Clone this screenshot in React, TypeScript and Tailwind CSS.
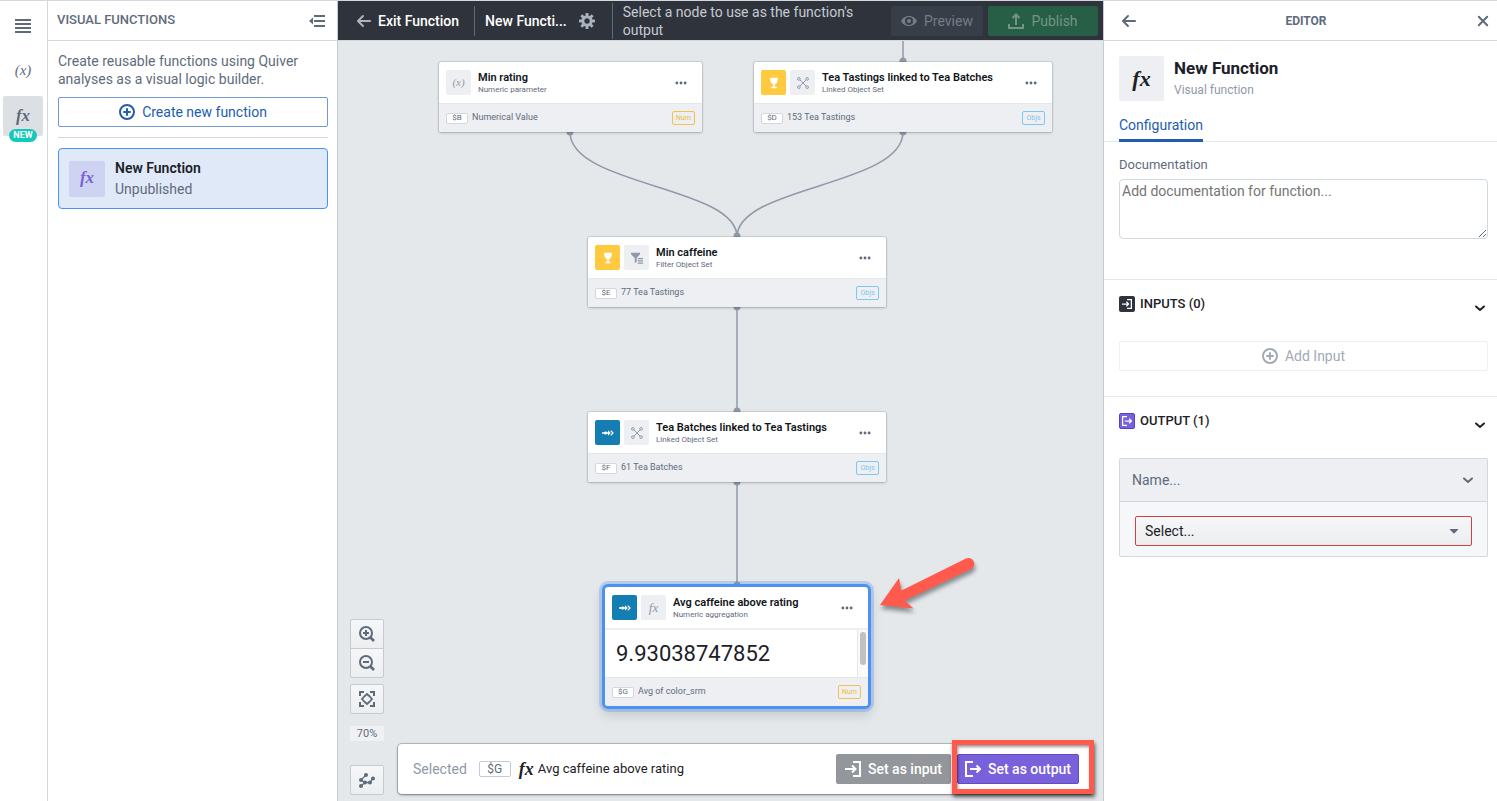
import { type ReactNode, useState } from 'react';
import clsx from 'clsx';

type IconProps = { className?: string };

const Icon = ({ className = 'size-4', children }: IconProps & { children: ReactNode }) => (
  <svg viewBox="0 0 16 16" className={clsx('shrink-0', className)} fill="currentColor" aria-hidden="true">
    {children}
  </svg>
);

const StrokeIcon = ({ className = 'size-4', children }: IconProps & { children: ReactNode }) => (
  <svg
    viewBox="0 0 16 16"
    className={clsx('shrink-0', className)}
    fill="none"
    stroke="currentColor"
    strokeWidth="2"
    aria-hidden="true"
  >
    {children}
  </svg>
);

const MenuIcon = ({ className }: IconProps) => (
  <Icon className={className}>
    <path d="M0 1h16v2H0zM0 5h16v2H0zM0 9h16v2H0zM0 13h16v2H0z" />
  </Icon>
);

const CollapseIcon = ({ className }: IconProps) => (
  <Icon className={className}>
    <path d="M5 2h11v2H5zM5 7h11v2H5zM5 12h11v2H5zM0 8l4-3.5v7z" />
  </Icon>
);

const ArrowLeftIcon = ({ className }: IconProps) => (
  <Icon className={className}>
    <path d="M13.99 6.99H4.41L7.7 3.7a1.003 1.003 0 0 0-1.42-1.42l-5 5a1.014 1.014 0 0 0 0 1.42l5 5a1.003 1.003 0 0 0 1.42-1.41L4.41 8.99H14c.55 0 1-.45 1-1s-.46-1-1.01-1z" />
  </Icon>
);

const AddIcon = ({ className }: IconProps) => (
  <StrokeIcon className={className}>
    <circle cx="8" cy="8" r="7" />
    <path d="M5 8h6M8 5v6" strokeLinecap="round" />
  </StrokeIcon>
);

const teeth = [0, 45, 90, 135, 180, 225, 270, 315];

const CogIcon = ({ className }: IconProps) => (
  <Icon className={className}>
    <circle cx="8" cy="8" r="4.2" fill="none" stroke="currentColor" strokeWidth="3" />
    {teeth.map((angle) => (
      <path key={angle} d="M6.6 0h2.8v3.2H6.6z" transform={`rotate(${angle} 8 8)`} />
    ))}
  </Icon>
);

const EyeIcon = ({ className }: IconProps) => (
  <Icon className={className}>
    <path
      fillRule="evenodd"
      d="M8 3C4 3 1.200 5.600 0 8c1.200 2.400 4 5 8 5s6.800-2.600 8-5c-1.200-2.400-4-5-8-5zm0 9a4 4 0 1 1 0-8 4 4 0 0 1 0 8zm0-6a2 2 0 1 0 0 4 2 2 0 0 0 0-4z"
    />
  </Icon>
);

const ExportIcon = ({ className }: IconProps) => (
  <StrokeIcon className={className}>
    <path d="M1 11v4h14v-4M8 12V2M4.500 5L8 1.500 11.500 5" />
  </StrokeIcon>
);

const CrossIcon = ({ className }: IconProps) => (
  <StrokeIcon className={className}>
    <path d="M3.800 3.800l8.400 8.400M12.200 3.800l-8.400 8.400" strokeLinecap="round" />
  </StrokeIcon>
);

const LogInIcon = ({ className }: IconProps) => (
  <StrokeIcon className={className}>
    <path d="M8 1h7v14H8M0 8h10M7 4.500L10.500 8 7 11.500" />
  </StrokeIcon>
);

const LogOutIcon = ({ className }: IconProps) => (
  <StrokeIcon className={className}>
    <path d="M8 1H1v14h7M5 8h10M11.500 4.500L15 8l-3.500 3.500" />
  </StrokeIcon>
);

const ChevronIcon = ({ className }: IconProps) => (
  <StrokeIcon className={className}>
    <path d="M4 6.500l4 3.500 4-3.500" strokeLinecap="round" />
  </StrokeIcon>
);

const MoreIcon = ({ className }: IconProps) => (
  <Icon className={className}>
    <circle cx="2.500" cy="8" r="1.900" />
    <circle cx="8" cy="8" r="1.900" />
    <circle cx="13.500" cy="8" r="1.900" />
  </Icon>
);

const ZoomIcon = ({ plus }: { plus?: boolean }) => (
  <StrokeIcon>
    <circle cx="7" cy="7" r="6" />
    <path d="M11.500 11.500l3.500 3.500" strokeWidth="2.600" />
    <path d={plus ? 'M4 7h6M7 4v6' : 'M4 7h6'} />
  </StrokeIcon>
);

const FitIcon = () => (
  <StrokeIcon>
    <path d="M1 5V1h4M11 1h4v4M15 11v4h-4M5 15H1v-4" />
    <path
      d="M5.500 5.200L8 3l2.500 2.200M5.500 10.800L8 13l2.500-2.200M5.200 5.500L3 8l2.200 2.500M10.800 5.500L13 8l-2.200 2.500"
      strokeWidth="1.800"
      strokeLinecap="round"
    />
  </StrokeIcon>
);

const GraphIcon = () => (
  <Icon>
    <path d="M2 14L6 10.500 11 10.500 14 6M2 8L6 10.500M2 8L7 3" fill="none" stroke="currentColor" strokeWidth="1.300" />
    <circle cx="2" cy="8" r="2" />
    <circle cx="7" cy="3" r="2" />
    <circle cx="6" cy="10.500" r="2" />
    <circle cx="11" cy="10.500" r="2" />
    <circle cx="14" cy="6.500" r="2" />
    <circle cx="2" cy="14" r="2" />
  </Icon>
);

const GobletIcon = () => (
  <Icon className="size-3">
    <path d="M3 1h10c.4 4.500-.8 7.800-4 8.600V13h2.500v2h-7v-2H7V9.600C3.800 8.800 2.600 5.500 3 1z" />
  </Icon>
);

const FlowIcon = () => (
  <Icon className="size-3">
    <path d="M0 7.100h3a2.400 2.400 0 0 1 4-.2h1V4.300L11.500 8 8 11.700V9.100H7a2.400 2.400 0 0 1-4-.2H0z" />
    <path d="M11.700 5L14.700 8l-3 3" fill="none" stroke="currentColor" strokeWidth="1.500" />
  </Icon>
);

const LinkedIcon = () => (
  <StrokeIcon className="size-3">
    <g strokeWidth="1.300">
      <path d="M4 4l8 8M12 4l-8 8" />
      <circle cx="2.500" cy="2.500" r="1.800" />
      <circle cx="13.500" cy="2.500" r="1.800" />
      <circle cx="2.500" cy="13.500" r="1.800" />
      <circle cx="13.500" cy="13.500" r="1.800" />
    </g>
  </StrokeIcon>
);

const FilterIcon = () => (
  <Icon className="size-3">
    <path d="M0 1h12v2L7.500 8v5L5 15V8L0 3zM9 8h7v1.800H9zM9 11h7v1.800H9zM9 14h7v1.800H9z" />
  </Icon>
);

const Fx = ({ className }: IconProps) => (
  <span className={clsx("font-['Liberation_Serif',serif] italic", className)}>fx</span>
);

const Badge = ({ kind }: { kind: 'Num' | 'Objs' }) => (
  <span
    className={clsx(
      'flex h-3.5 w-[23px] items-center justify-center rounded-xs border text-[7px]',
      kind === 'Num' ? 'border-[#f3c14f] text-[#f0b93e]' : 'border-[#7cc8ee] text-[#7cc8ee]',
    )}
  >
    {kind}
  </span>
);

type NodeData = {
  id: string;
  title: string;
  subtitle: string;
  value: string;
  kind: 'Num' | 'Objs';
  place: string;
  source?: 'tasting' | 'batch';
  op: ReactNode;
  result?: string;
};

const nodes: NodeData[] = [
  {
    id: '$B',
    title: 'Min rating',
    subtitle: 'Numeric parameter',
    value: 'Numerical Value',
    kind: 'Num',
    place: 'left-[101px] top-[21px] w-[263px]',
    op: <span className="font-['Liberation_Serif',serif] text-[11px] italic">(x)</span>,
  },
  {
    id: '$D',
    title: 'Tea Tastings linked to Tea Batches',
    subtitle: 'Linked Object Set',
    value: '153 Tea Tastings',
    kind: 'Objs',
    place: 'left-[416px] top-[21px] w-[298px]',
    source: 'tasting',
    op: <LinkedIcon />,
  },
  {
    id: '$E',
    title: 'Min caffeine',
    subtitle: 'Filter Object Set',
    value: '77 Tea Tastings',
    kind: 'Objs',
    place: 'left-[250px] top-[196px] w-[298px]',
    source: 'tasting',
    op: <FilterIcon />,
  },
  {
    id: '$F',
    title: 'Tea Batches linked to Tea Tastings',
    subtitle: 'Linked Object Set',
    value: '61 Tea Batches',
    kind: 'Objs',
    place: 'left-[250px] top-[371px] w-[298px]',
    source: 'batch',
    op: <LinkedIcon />,
  },
  {
    id: '$G',
    title: 'Avg caffeine above rating',
    subtitle: 'Numeric aggregation',
    value: 'Avg of color_srm',
    kind: 'Num',
    place: 'left-[264px] top-[543px] w-[269px]',
    source: 'batch',
    op: <Fx className="text-[13px]" />,
    result: '9.93038747852',
  },
];

const NodeCard = ({ node }: { node: NodeData }) => (
  <article
    className={clsx(
      'absolute overflow-hidden bg-white',
      node.place,
      node.result
        ? 'rounded-md border-3 border-[#4c90f0] shadow-[0_0_0_3px_#4c90f04d,0_6px_12px_#11141826]'
        : 'rounded-xs shadow-[0_0_0_1px_#1114181a,0_1px_3px_#11141833]',
    )}
  >
    <div className="flex h-[41px] items-center gap-1 px-[7px]">
      {node.source && (
        <span
          className={clsx(
            'flex size-[25px] items-center justify-center rounded-xs text-white',
            node.source === 'tasting' ? 'bg-[#ffc940]' : 'bg-[#147eb3]',
          )}
        >
          {node.source === 'tasting' ? <GobletIcon /> : <FlowIcon />}
        </span>
      )}
      <span className="flex size-[25px] items-center justify-center rounded-xs bg-[#edeff2] text-[#8f99a8]">
        {node.op}
      </span>
      <div className="min-w-0 flex-1 pl-[3px]">
        <h3 className="truncate text-[11px] leading-[13px] font-semibold text-[#111418]">{node.title}</h3>
        <p className="text-[8px] leading-[11px] text-[#5f6b7c]">{node.subtitle}</p>
      </div>
      <button type="button" aria-label={`${node.title} options`} className="mr-2 text-[#5f6b7c]">
        <MoreIcon className="size-3" />
      </button>
    </div>
    {node.result && (
      <div className="flex h-[49px] border-t-2 border-[#edeff2]">
        <p className="flex flex-1 items-center pl-[11px] text-[22px] text-[#1c2127]">{node.result}</p>
        <div className="w-[11px] border-l border-[#e5e8eb] bg-[#fafafa] px-[2px] pt-[2px]">
          <div className="h-[33px] rounded-full bg-[#c1c1c1]" />
        </div>
      </div>
    )}
    <div className="flex h-[29px] items-center gap-1 border-t border-[#e5e8eb] bg-[#edeff2] px-[7px] text-[9px] text-[#5f6b7c]">
      <span className="flex h-[11px] w-[22px] items-center justify-center rounded-xs border border-[#d3d8de] bg-white text-[8px]">
        {node.id}
      </span>
      <span className="flex-1">{node.value}</span>
      <Badge kind={node.kind} />
    </div>
  </article>
);

const ports = [
  [565, 20],
  [232, 91],
  [565, 91],
  [399, 195],
  [399, 266],
  [399, 370],
  [399, 441],
  [399, 544],
];

const Edges = () => (
  <svg className="absolute inset-0 h-full w-full" aria-hidden="true">
    <g fill="none" stroke="#8f99a8" strokeWidth="1.500">
      <path d="M565 0V21M232 91C232 145 399 145 399 196M565 91C565 145 399 145 399 196M399 266V371M399 441V543" />
    </g>
    {ports.map(([x, y]) => (
      <circle key={`${x}-${y}`} cx={x} cy={y} r="3.500" fill="#8f99a8" />
    ))}
  </svg>
);

const toolButton =
  'flex h-[30px] w-[34px] items-center justify-center border border-[#c5cbd3] bg-linear-to-b from-[#f6f7f9] to-[#eceef0] text-[#5f6b7c]';

const CanvasTools = () => (
  <div className="absolute bottom-1.5 left-3 flex flex-col">
    <button type="button" aria-label="Zoom in" className={clsx(toolButton, 'rounded-t-xs')}>
      <ZoomIcon plus />
    </button>
    <button type="button" aria-label="Zoom out" className={clsx(toolButton, '-mt-px rounded-b-xs')}>
      <ZoomIcon />
    </button>
    <button type="button" aria-label="Zoom to fit" className={clsx(toolButton, 'mt-1.5 rounded-xs')}>
      <FitIcon />
    </button>
    <span className="mt-3 bg-[#f0f1f5] text-center text-[11px] leading-[15px] text-[#5f6b7c]">70%</span>
    <button type="button" aria-label="Auto layout" className={clsx(toolButton, 'mt-6 rounded-xs')}>
      <GraphIcon />
    </button>
  </div>
);

const SelectionBar = () => (
  <div className="absolute right-2.5 bottom-[7px] left-[60px] flex h-[50px] items-center rounded-sm bg-white pr-3.5 pl-[15px] text-sm shadow-[0_0_0_1px_#11141833,0_1px_3px_#11141866]">
    <span className="text-[#8f99a8]">Selected</span>
    <span className="ml-3 flex h-4 w-8 items-center justify-center rounded-xs border border-[#c5cbd3] text-xs text-[#5f6b7c]">
      $G
    </span>
    <Fx className="ml-2 text-lg leading-none font-bold text-[#1c2127]" />
    <span className="ml-1 flex-1 truncate text-[13px] text-[#1c2127]">Avg caffeine above rating</span>
    <button
      type="button"
      className="flex h-[30px] w-[115px] items-center justify-center gap-[7px] rounded-xs bg-[#93979b] font-medium whitespace-nowrap text-white"
    >
      <LogInIcon /> Set as input
    </button>
    <button
      type="button"
      className="ml-1.5 flex h-[30px] w-[122px] items-center justify-center gap-[7px] rounded-xs border border-[#634dbf] bg-[#7961db] font-medium whitespace-nowrap text-white"
    >
      <LogOutIcon /> Set as output
    </button>
  </div>
);

const Annotations = () => (
  <>
    <svg
      viewBox="0 0 104 60"
      className="absolute top-[512px] left-[537px] h-[60px] w-[104px] drop-shadow-[1px_4px_2px_#0006]"
      aria-hidden="true"
    >
      <path
        d="M5 52L24 25L26.500 37.500L91 5.600A5.500 5.500 0 0 1 96 16L29.500 47.500L38.500 55.500Z"
        fill="#ff5a4b"
      />
    </svg>
    <div className="pointer-events-none absolute right-[9px] bottom-[7px] h-[54px] w-[142px] border-[5px] border-[#ff5a4b] shadow-[1px_3px_4px_#0009,inset_1px_2px_3px_#0006]" />
  </>
);

const Rail = () => (
  <nav className="flex w-12 shrink-0 flex-col items-center border-r border-[#d3d8de] pt-[17px] pr-px text-[#5f6b7c]">
    <button type="button" aria-label="Menu">
      <MenuIcon />
    </button>
    <button
      type="button"
      aria-label="Parameters"
      className="mt-6 h-6 font-['Liberation_Serif',serif] text-[15px] italic"
    >
      (x)
    </button>
    <button
      type="button"
      aria-label="Visual functions"
      className="relative mt-3.5 flex size-10 items-center justify-center rounded-xs bg-[#dce0e5]"
    >
      <Fx className="text-[17px] font-bold" />
      <span className="absolute -bottom-1.5 flex h-[13px] items-center rounded-full bg-[#13c9ba] px-1 text-[9px] font-bold text-white">
        NEW
      </span>
    </button>
  </nav>
);

const FunctionsPanel = () => (
  <aside className="w-[290px] shrink-0 border-r border-[#c5cbd3] text-sm text-[#5f6b7c]">
    <header className="flex h-10 items-center justify-between border-b border-[#d3d8de] pr-3 pl-[9px]">
      <h2 className="text-[13px] font-medium">VISUAL FUNCTIONS</h2>
      <button type="button" aria-label="Collapse panel">
        <CollapseIcon />
      </button>
    </header>
    <div className="px-2.5 pt-[11px] pr-[9px]">
      <p className="leading-[18px]">Create reusable functions using Quiver analyses as a visual logic builder.</p>
      <button
        type="button"
        className="mt-[9px] flex h-[30px] w-full items-center justify-center gap-[7px] rounded-xs border border-[#7397d3] text-[#215db0]"
      >
        <AddIcon /> Create new function
      </button>
      <hr className="mt-2.5 border-[#d3d8de]" />
      <button
        type="button"
        className="mt-2.5 flex h-[61px] w-full items-center gap-2.5 rounded-sm border border-[#4c90f0] bg-[#e0e9f8] px-2.5 text-left"
      >
        <span className="flex size-9 items-center justify-center rounded-xs bg-[#cfd3f2] text-[#7961db]">
          <Fx className="text-[17px] font-bold" />
        </span>
        <span>
          <span className="block leading-[21px] font-semibold text-[#1c2127]">New Function</span>
          <span className="block leading-[21px]">Unpublished</span>
        </span>
      </button>
    </div>
  </aside>
);

const FunctionBar = () => (
  <header className="flex h-[39px] items-center bg-[#2f343c] pr-[5px] text-sm text-white">
    <button type="button" className="flex h-[30px] items-center gap-1.5 pr-[15px] pl-[18px] font-medium whitespace-nowrap">
      <ArrowLeftIcon className="size-4 text-[#abb3bf]" /> Exit Function
    </button>
    <div className="flex h-[30px] items-center border-l border-[#5f6b7c] pl-2.5 font-medium whitespace-nowrap">
      New Functi...
    </div>
    <button type="button" aria-label="Function settings" className="ml-3 text-[#abb3bf]">
      <CogIcon />
    </button>
    <p className="ml-[17px] min-w-0 flex-1 border-l border-[#5f6b7c] pr-5 pl-2.5 leading-[18px] text-[#c5cbd3]">
      Select a node to use as the function's output
    </p>
    <button
      type="button"
      disabled
      className="flex h-[30px] w-[92px] items-center justify-center gap-[7px] rounded-xs bg-[#383e47] text-[#737c89]"
    >
      <EyeIcon /> Preview
    </button>
    <button
      type="button"
      disabled
      className="ml-[5px] flex h-[30px] w-[110px] items-center justify-center gap-[7px] rounded-xs bg-[#275f46] text-[#739485]"
    >
      <ExportIcon /> Publish
    </button>
  </header>
);

const SectionTitle = ({ icon, children }: { icon: ReactNode; children: ReactNode }) => (
  <div className="flex items-center gap-[5px] text-[#1c2127]">
    {icon}
    <h3 className="flex-1 text-[13px] font-medium">{children}</h3>
    <button type="button" aria-label="Toggle section" className="mt-2">
      <ChevronIcon />
    </button>
  </div>
);

const EditorPanel = () => {
  const [documentation, setDocumentation] = useState('');
  const [name, setName] = useState('');
  const [output, setOutput] = useState('');

  return (
    <aside className="w-[394px] shrink-0 border-l border-[#c5cbd3] text-sm text-[#5f6b7c]">
      <header className="flex h-10 items-center justify-between border-b border-[#d3d8de] pr-1.5 pl-[17px]">
        <button type="button" aria-label="Back">
          <ArrowLeftIcon />
        </button>
        <h2 className="text-xs font-bold">EDITOR</h2>
        <button type="button" aria-label="Close editor">
          <CrossIcon />
        </button>
      </header>

      <div className="flex gap-2.5 px-[15px] pt-[15px]">
        <span className="flex size-[45px] items-center justify-center rounded-xs bg-[#edeff2] text-[#1c2127]">
          <Fx className="text-[22px] font-bold" />
        </span>
        <div>
          <h1 className="text-[17px] leading-6 font-bold text-[#1c2127]">New Function</h1>
          <p className="text-xs leading-5 text-[#8f99a8]">Visual function</p>
        </div>
      </div>

      <div className="mt-[9px] flex border-b border-[#e5e8eb] px-[15px]">
        <button type="button" className="-mb-px h-8 border-b-3 border-[#215db0] text-[#215db0]">
          Configuration
        </button>
      </div>

      <div className="border-b border-[#e5e8eb] pt-3.5 pr-[9px] pb-10 pl-[15px]">
        <label htmlFor="documentation" className="block text-[13px] leading-[18px]">
          Documentation
        </label>
        <textarea
          id="documentation"
          value={documentation}
          onChange={(e) => setDocumentation(e.target.value)}
          placeholder="Add documentation for function..."
          className="mt-[5px] block h-[60px] w-full rounded-sm border border-[#ced9e0] px-[2px] py-px text-[#1c2127] placeholder:text-[#757575]"
        />
      </div>

      <section className="border-b border-[#e5e8eb] pt-3 pr-[9px] pb-[25px] pl-[15px]">
        <SectionTitle
          icon={
            <span className="flex size-4 items-center justify-center rounded-xs bg-[#2f343c] text-white">
              <LogInIcon className="size-2.5" />
            </span>
          }
        >
          INPUTS (0)
        </SectionTitle>
        <button
          type="button"
          disabled
          className="mt-[25px] flex h-[30px] w-full items-center justify-center gap-[7px] rounded-xs border border-[#eeeff1] text-[#a2aab4]"
        >
          <AddIcon /> Add Input
        </button>
      </section>

      <section className="pt-3 pr-[9px] pl-[15px]">
        <SectionTitle
          icon={
            <span className="flex size-4 items-center justify-center rounded-xs border border-[#5642c6] bg-[#7961db] text-white">
              <LogOutIcon className="size-2.5" />
            </span>
          }
        >
          OUTPUT (1)
        </SectionTitle>
        <div className="mt-[25px] rounded-xs border border-[#d3d8de] bg-[#f6f7f9]">
          <div className="flex h-[43px] items-center border-b border-[#d3d8de] bg-[#edeff2] pr-[11px] pl-3">
            <input
              type="text"
              aria-label="Output name"
              value={name}
              onChange={(e) => setName(e.target.value)}
              placeholder="Name..."
              className="min-w-0 flex-1 outline-none placeholder:text-[#5f6b7c]"
            />
            <button type="button" aria-label="Toggle output">
              <ChevronIcon />
            </button>
          </div>
          <div className="px-[15px] pt-3.5 pb-2.5">
            <div className="relative">
              <select
                aria-label="Output node"
                value={output}
                onChange={(e) => setOutput(e.target.value)}
                className="h-[30px] w-full appearance-none rounded-xs border border-[#cd4246] bg-linear-to-b from-[#f6f7f9] to-[#ebedee] px-[9px] text-[#1c2127]"
              >
                <option value="">Select...</option>
                <option value="$G">Avg caffeine above rating</option>
              </select>
              <Icon className="pointer-events-none absolute top-[7px] right-2.5 size-4">
                <path d="M4.300 6h7.400c.4 0 .6.500.3.800L8.500 10.300c-.3.300-.7.300-1 0L4 6.800c-.3-.3-.1-.8.300-.8z" />
              </Icon>
            </div>
          </div>
        </div>
      </section>
    </aside>
  );
};

export default function App() {
  return (
    <div className="flex h-screen min-h-[640px] overflow-hidden border-t border-[#d3d8de] bg-white font-[Roboto,sans-serif]">
      <Rail />
      <FunctionsPanel />
      <main className="flex min-w-0 flex-1 flex-col">
        <FunctionBar />
        <div className="relative flex-1 overflow-hidden border-t border-[#d3d8de] bg-[#e4e8eb]">
          <Edges />
          {nodes.map((node) => (
            <NodeCard key={node.id} node={node} />
          ))}
          <CanvasTools />
          <SelectionBar />
          <Annotations />
        </div>
      </main>
      <EditorPanel />
    </div>
  );
}
